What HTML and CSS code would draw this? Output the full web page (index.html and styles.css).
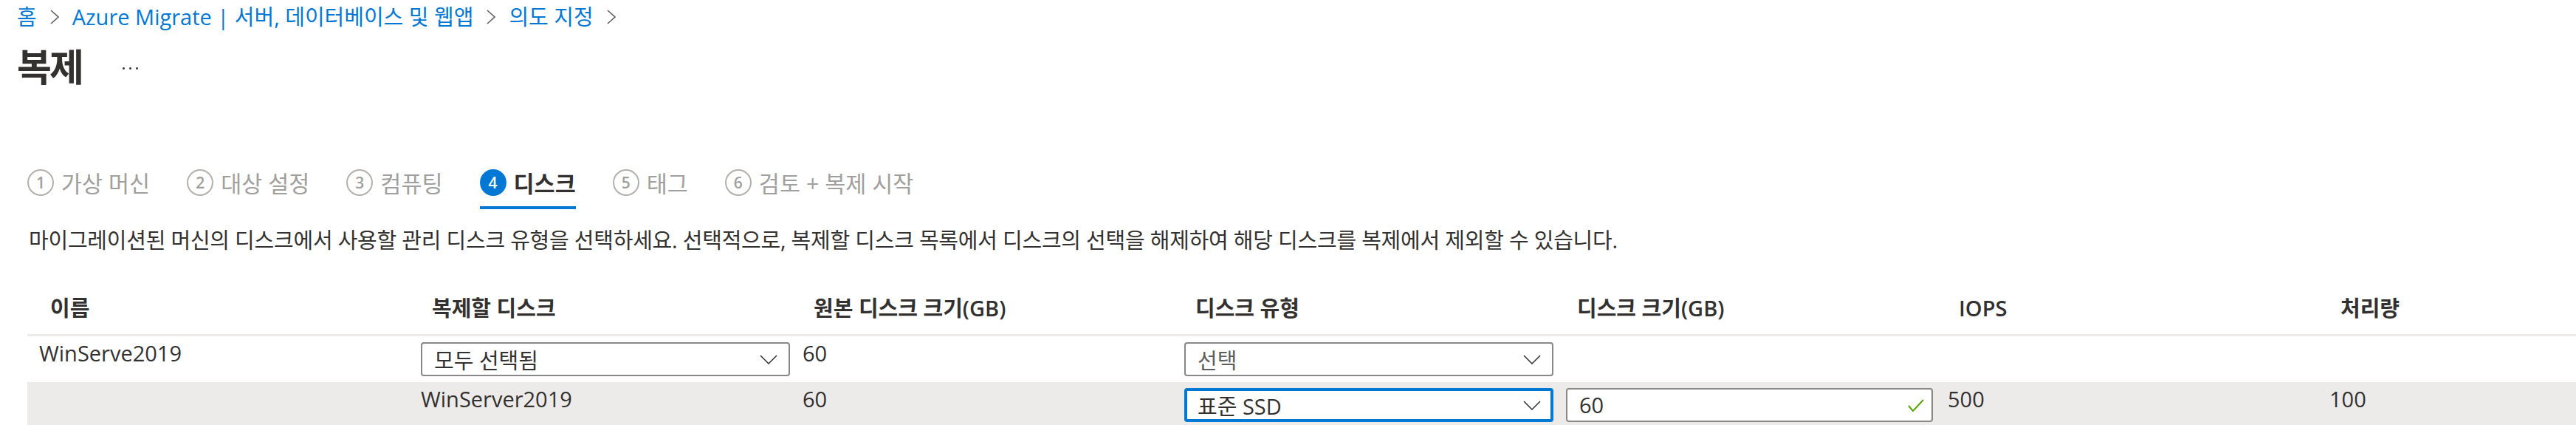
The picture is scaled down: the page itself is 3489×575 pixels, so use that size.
FILE: index.html
```html
<!DOCTYPE html>
<html lang="ko">
<head>
  <meta charset="utf-8">
  <title>복제 - Azure Migrate</title>
  <link rel="stylesheet" href="styles.css">
</head>
<body>
  <div class="page">
    <nav class="crumbs">
      <a class="crumb">홈</a>
      <svg class="crumb-sep" width="12" height="20" viewBox="0 0 12 20"><polyline points="1,1 11,10 1,19" fill="none" stroke="#605e5c" stroke-width="1.6"/></svg>
      <a class="crumb">Azure Migrate | 서버, 데이터베이스 및 웹앱</a>
      <svg class="crumb-sep" width="12" height="20" viewBox="0 0 12 20"><polyline points="1,1 11,10 1,19" fill="none" stroke="#605e5c" stroke-width="1.6"/></svg>
      <a class="crumb">의도 지정</a>
      <svg class="crumb-sep" width="12" height="20" viewBox="0 0 12 20"><polyline points="1,1 11,10 1,19" fill="none" stroke="#605e5c" stroke-width="1.6"/></svg>
    </nav>

    <div class="title-row">
      <h1 class="title">복제</h1>
      <span class="more"><i></i><i></i><i></i></span>
    </div>

    <ul class="steps">
      <li class="step"><span class="step-num">1</span>가상 머신</li>
      <li class="step"><span class="step-num">2</span>대상 설정</li>
      <li class="step"><span class="step-num">3</span>컴퓨팅</li>
      <li class="step active"><span class="step-num">4</span>디스크</li>
      <li class="step"><span class="step-num">5</span>태그</li>
      <li class="step"><span class="step-num">6</span>검토 + 복제 시작</li>
    </ul>

    <p class="intro">마이그레이션된 머신의 디스크에서 사용할 관리 디스크 유형을 선택하세요. 선택적으로, 복제할 디스크 목록에서 디스크의 선택을 해제하여 해당 디스크를 복제에서 제외할 수 있습니다.</p>

    <div class="grid">
      <div class="row head">
        <div class="cell">이름</div>
        <div class="cell">복제할 디스크</div>
        <div class="cell">원본 디스크 크기(GB)</div>
        <div class="cell">디스크 유형</div>
        <div class="cell">디스크 크기(GB)</div>
        <div class="cell">IOPS</div>
        <div class="cell">처리량</div>
      </div>

      <div class="row">
        <div class="cell">WinServe2019</div>
        <div class="cell">
          <div class="dropdown">
            <span>모두 선택됨</span>
            <svg width="24" height="13" viewBox="0 0 24 13"><polyline points="1,1 12,12 23,1" fill="none" stroke="#323130" stroke-width="1.5"/></svg>
          </div>
        </div>
        <div class="cell">60</div>
        <div class="cell">
          <div class="dropdown">
            <span class="placeholder">선택</span>
            <svg width="24" height="13" viewBox="0 0 24 13"><polyline points="1,1 12,12 23,1" fill="none" stroke="#323130" stroke-width="1.5"/></svg>
          </div>
        </div>
        <div class="cell"></div>
        <div class="cell"></div>
        <div class="cell"></div>
      </div>

      <div class="row alt">
        <div class="cell"></div>
        <div class="cell">WinServer2019</div>
        <div class="cell">60</div>
        <div class="cell">
          <div class="dropdown focused">
            <span>표준 SSD</span>
            <svg width="24" height="13" viewBox="0 0 24 13"><polyline points="1,1 12,12 23,1" fill="none" stroke="#323130" stroke-width="1.5"/></svg>
          </div>
        </div>
        <div class="cell">
          <div class="textbox">
            <span>60</span>
            <svg width="22" height="17" viewBox="0 0 22 17"><polyline points="1,9 7,16 21,1" fill="none" stroke="#57a300" stroke-width="2"/></svg>
          </div>
        </div>
        <div class="cell">500</div>
        <div class="cell">100</div>
      </div>
    </div>
  </div>
</body>
</html>
```

FILE: styles.css
```css
html, body {
  margin: 0;
  padding: 0;
  background: #fff;
}
body {
  width: 3489px;
  height: 575px;
  overflow: hidden;
  font-family: "Open Sans", "Noto Sans CJK KR", sans-serif;
  font-size: 29px;
  color: #323130;
}
.page {
  width: 3489px;
}

/* breadcrumb */
.crumbs {
  display: flex;
  align-items: center;
  gap: 18px;
  height: 46px;
  padding-left: 23px;
}
.crumb {
  color: #0078d4;
  text-decoration: none;
  line-height: 46px;
}

/* title */
.title-row {
  display: flex;
  align-items: center;
  margin-top: 14px;
  height: 60px;
  padding-left: 23px;
}
.title {
  margin: 0;
  font-size: 51px;
  font-weight: 700;
  letter-spacing: -3px;
  line-height: 60px;
}
.more {
  display: flex;
  gap: 6px;
  margin-left: 55px;
  margin-top: 4px;
}
.more i {
  display: block;
  width: 3px;
  height: 3px;
  border-radius: 50%;
  background: #323130;
}

/* wizard steps */
.steps {
  display: flex;
  gap: 50px;
  list-style: none;
  margin: 109px 0 0 0;
  padding: 0 0 0 37px;
}
.step {
  display: flex;
  align-items: center;
  gap: 10px;
  height: 36px;
  padding-bottom: 14px;
  border-bottom: 4px solid transparent;
  font-size: 30.5px;
  color: #a19f9d;
}
.step-num {
  display: flex;
  align-items: center;
  justify-content: center;
  box-sizing: border-box;
  width: 36px;
  height: 36px;
  border: 2px solid #b3b0ad;
  border-radius: 50%;
  font-size: 21px;
  font-weight: 600;
  color: #a19f9d;
}
.step.active {
  border-bottom-color: #0078d4;
  color: #323130;
  font-weight: 600;
}
.step.active .step-num {
  background: #0078d4;
  border-color: #0078d4;
  color: #fff;
}

/* intro */
.intro {
  margin: 22px 0 0 39px;
  line-height: 40px;
  letter-spacing: -0.23px;
}

/* disk grid */
.grid {
  margin: 35px 0 0 37px;
}
.row {
  display: grid;
  grid-template-columns: repeat(7, 517px);
}
.row .cell {
  padding: 8px 0 8px 16px;
  line-height: 30px;
  min-height: 46px;
}
.row.head {
  border-bottom: 3px solid #edebe9;
}
.row.head .cell {
  padding: 17px 0 15px 31px;
  line-height: 40px;
  min-height: 0;
  font-weight: 600;
}
.row.alt {
  background: #edebe9;
  min-height: 70px;
}

.dropdown, .textbox {
  display: flex;
  align-items: center;
  justify-content: space-between;
  box-sizing: border-box;
  width: 500px;
  height: 46px;
  padding: 0 15px 0 16px;
  border: 2px solid #8a8886;
  border-radius: 4px;
  background: #fff;
  line-height: 40px;
}
.dropdown span {
  margin-top: 4px;
}
.dropdown.focused {
  border: 4px solid #0078d4;
  padding: 0 13px 0 14px;
}
.placeholder {
  color: #605e5c;
}
.textbox {
  width: 497px;
  padding-right: 10px;
}
```
